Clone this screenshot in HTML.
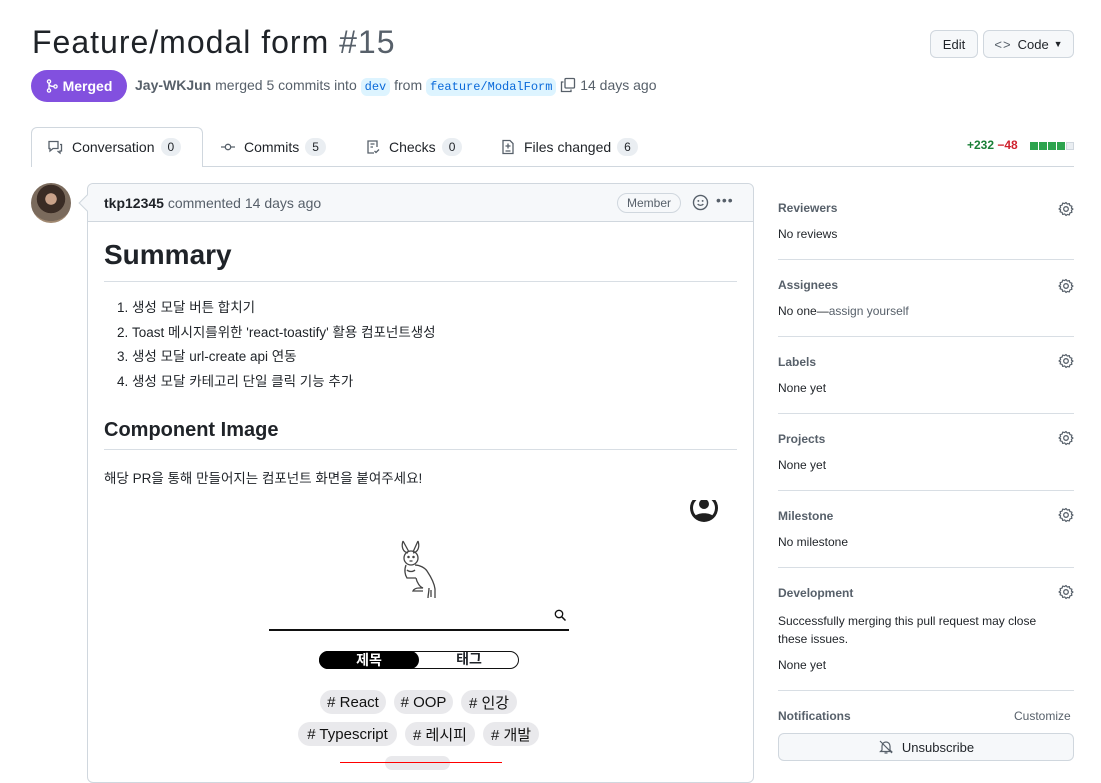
<!DOCTYPE html>
<html><head><meta charset="utf-8"><style>
*{box-sizing:border-box;margin:0;padding:0}
body{width:1101px;height:763px;overflow:hidden;background:#fff;font-family:"Liberation Sans","Noto Sans CJK KR",sans-serif;color:#1f2328;position:relative;font-size:14px}
.a{position:absolute;white-space:nowrap}
.btn{border:1px solid #d0d7de;background:#f6f8fa;border-radius:6px;font-size:13px;display:flex;align-items:center;justify-content:center}
.cnt{display:inline-block;background:#eaeef2;border-radius:10px;font-size:12px;padding:2px 7px;margin-left:6px;color:#1f2328}
.tab{position:absolute;top:128px;height:38px;display:flex;align-items:center;font-size:14px;color:#1f2328}
.mono{font-family:"Liberation Mono",monospace;font-size:12px;color:#0969da;background:#ddf4ff;border-radius:6px;padding:2px 4px}
.sh{position:absolute;left:778px;font-size:12px;font-weight:bold;color:#57606a}
.sv{position:absolute;left:778px;font-size:12px;color:#1f2328}
.hr{position:absolute;left:778px;width:296px;height:1px;background:#d8dee4}
.gear{position:absolute;left:1058px}
.tag{position:absolute;height:24px;background:#e9e9ec;border-radius:12px;font-size:15px;display:flex;align-items:center;justify-content:center;color:#111}
</style></head><body>
<div class="a" style="left:32px;top:24px;font-size:32px;letter-spacing:1px;color:#1f2328">Feature/modal form <span style="color:#57606a">#15</span></div>
<div class="a btn" style="left:930px;top:30px;width:48px;height:28px">Edit</div>
<div class="a btn" style="left:983px;top:30px;width:91px;height:28px"><span style="letter-spacing:1px;margin-right:6px;color:#57606a">&lt;&gt;</span>Code<span style="font-size:9px;margin-left:5px">▼</span></div>

<div class="a" style="left:31px;top:70px;width:96px;height:32px;background:#8250df;border-radius:16px;color:#fff;font-weight:bold;font-size:14px;display:flex;align-items:center;justify-content:center">
<svg width="12" height="14" viewBox="0 0 12 14" style="margin-right:5px"><circle cx="3" cy="2.5" r="1.6" fill="none" stroke="#fff" stroke-width="1.3"/><circle cx="3" cy="11.5" r="1.6" fill="none" stroke="#fff" stroke-width="1.3"/><circle cx="9.5" cy="7.5" r="1.6" fill="none" stroke="#fff" stroke-width="1.3"/><path d="M3 4v6M3 4c0 3 2 3.5 5 3.5" fill="none" stroke="#fff" stroke-width="1.3"/></svg>Merged</div>
<div class="a" style="left:135px;top:77px;font-size:14px;color:#57606a"><b style="color:#57606a">Jay-WKJun</b> merged 5 commits into <span class="mono">dev</span> from <span class="mono">feature/ModalForm</span> <svg width="16" height="16" viewBox="0 0 16 16" style="vertical-align:-3px"><rect x="5" y="1.5" width="9.5" height="9.5" rx="1" fill="none" stroke="#57606a" stroke-width="1.3"/><path d="M3.5 5H1.5v9.5H11v-2" fill="none" stroke="#57606a" stroke-width="1.3"/></svg> 14 days ago</div>

<div class="a" style="left:31px;top:127px;width:172px;height:40px;border:1px solid #d0d7de;border-bottom:none;border-radius:6px 6px 0 0;background:#fff;z-index:2"></div>
<div class="a" style="left:31px;top:166px;width:1043px;height:1px;background:#d0d7de"></div>
<div class="tab" style="left:47px;z-index:3"><svg width="16" height="16" viewBox="0 0 16 16" style="margin-right:9px"><path d="M2 2.5h9v7H6l-3 2.5V9.5H2z" fill="none" stroke="#57606a" stroke-width="1.3"/><path d="M13 5.5h1.5v6.5h-1.5v2l-2.5-2" fill="none" stroke="#57606a" stroke-width="1.3"/></svg>Conversation<span class="cnt">0</span></div>
<div class="tab" style="left:220px"><svg width="16" height="16" viewBox="0 0 16 16" style="margin-right:8px"><circle cx="8" cy="8" r="2.7" fill="none" stroke="#57606a" stroke-width="1.3"/><path d="M1 8h4.3M10.7 8H15" stroke="#57606a" stroke-width="1.3"/></svg>Commits<span class="cnt">5</span></div>
<div class="tab" style="left:365px"><svg width="16" height="16" viewBox="0 0 16 16" style="margin-right:8px"><path d="M9 14H3V2h9v6" fill="none" stroke="#57606a" stroke-width="1.3"/><path d="M5.5 5h4M5.5 8h2.5M9.5 12l1.5 1.5 3-3" fill="none" stroke="#57606a" stroke-width="1.3"/></svg>Checks<span class="cnt">0</span></div>
<div class="tab" style="left:500px"><svg width="16" height="16" viewBox="0 0 16 16" style="margin-right:8px"><path d="M3 1.5h7l3 3v10H3z" fill="none" stroke="#57606a" stroke-width="1.3"/><path d="M8 4.5v5M5.5 7h5M5.5 12h5" stroke="#57606a" stroke-width="1.3"/></svg>Files changed<span class="cnt">6</span></div>
<div class="a" style="left:967px;top:138px;font-size:12px;font-weight:bold"><span style="color:#1a7f37">+232</span> <span style="color:#cf222e">−48</span></div>
<div class="a" style="left:1030px;top:142px;display:flex;gap:1px"><i style="width:8px;height:8px;background:#2da44e"></i><i style="width:8px;height:8px;background:#2da44e"></i><i style="width:8px;height:8px;background:#2da44e"></i><i style="width:8px;height:8px;background:#2da44e"></i><i style="width:8px;height:8px;background:#eaeef2;border:1px solid #d0d7de"></i></div>

<div class="a" style="left:31px;top:183px;width:40px;height:40px;border-radius:50%;background:radial-gradient(circle at 50% 40%,#c9a28a 0 18%,#3a2c25 19% 45%,#7a6a5c 46% 70%,#a08870 71%)"></div>
<div class="a" style="left:87px;top:183px;width:667px;height:600px;border:1px solid #d0d7de;border-radius:6px"></div>
<div class="a" style="left:88px;top:184px;width:665px;height:38px;background:#f6f8fa;border-bottom:1px solid #d0d7de;border-radius:6px 6px 0 0"></div>
<div class="a" style="left:81px;top:197px;width:12px;height:12px;background:#f6f8fa;border-left:1px solid #d0d7de;border-bottom:1px solid #d0d7de;transform:rotate(45deg)"></div>
<div class="a" style="left:104px;top:195px;font-size:14px;color:#57606a"><b style="color:#1f2328">tkp12345</b> commented 14 days ago</div>
<div class="a" style="left:617px;top:193px;width:64px;height:20px;border:1px solid #d0d7de;border-radius:10px;font-size:12px;color:#57606a;display:flex;align-items:center;justify-content:center">Member</div>
<svg class="a" style="left:692px;top:194px" width="17" height="17" viewBox="0 0 16 16"><circle cx="8" cy="8" r="6.6" fill="none" stroke="#57606a" stroke-width="1.3"/><circle cx="6" cy="6.5" r=".9" fill="#57606a"/><circle cx="10" cy="6.5" r=".9" fill="#57606a"/><path d="M5.3 9.5c1.4 1.6 4 1.6 5.4 0" fill="none" stroke="#57606a" stroke-width="1.2"/></svg>
<div class="a" style="left:716px;top:192px;font-size:14px;color:#57606a;letter-spacing:1px">•••</div>

<div class="a" style="left:104px;top:239px;font-size:28px;font-weight:bold">Summary</div>
<div class="a" style="left:104px;top:281px;width:633px;height:1px;background:#d8dee4"></div>
<div class="a" style="left:117px;top:296px;font-size:13.5px;line-height:24.5px">1. 생성 모달 버튼 합치기<br>2. Toast 메시지를위한 'react-toastify' 활용 컴포넌트생성<br>3. 생성 모달 url-create api 연동<br>4. 생성 모달 카테고리 단일 클릭 기능 추가</div>
<div class="a" style="left:104px;top:419px;font-size:20px;font-weight:bold">Component Image</div>
<div class="a" style="left:104px;top:449px;width:633px;height:1px;background:#d8dee4"></div>
<div class="a" style="left:104px;top:467px;font-size:13.5px">해당 PR을 통해 만들어지는 컴포넌트 화면을 붙여주세요!</div>

<svg class="a" style="left:688px;top:498px" width="32" height="26" viewBox="0 0 32 26"><circle cx="16" cy="10" r="14" fill="#1f1f1f"/><circle cx="16" cy="10" r="11" fill="#fff"/><circle cx="16" cy="6" r="5" fill="#1f1f1f"/><path d="M6 19c3-5 17-5 20 0c-5 4-15 4-20 0z" fill="#1f1f1f"/><rect x="0" y="-4" width="32" height="6" fill="#fff"/></svg>
<svg class="a" style="left:396px;top:538px" width="48" height="62" viewBox="0 0 48 62" fill="none" stroke="#444" stroke-width="1.3"><path d="M7 3l6 11M22 3l-5 11M7 3c-2 6 0 11 5 12M22 3c2 6 0 11-5 12"/><ellipse cx="15" cy="20" rx="7" ry="7"/><circle cx="12.5" cy="19" r=".6" fill="#444"/><circle cx="17.5" cy="19" r=".6" fill="#444"/><path d="M13.5 23h3"/><path d="M10 27c-2 5-1 10 1 13h9M19 27c5 0 10 3 12 6s7 10 8 18v9M20 40c1 5 4 9 7 10h-4c-3 0-5 1-6 3h10M33 50c0 4-1 7-1 10M35 52v7"/><path d="M11 32c2 2 6 2 8 0"/></svg>
<div class="a" style="left:269px;top:629px;width:300px;height:1.5px;background:#111"></div>
<svg class="a" style="left:554px;top:609px" width="13" height="13" viewBox="0 0 13 13"><circle cx="5" cy="5" r="3.7" fill="none" stroke="#111" stroke-width="1.3"/><path d="M7.8 7.8l3.7 3.7" stroke="#111" stroke-width="1.5"/></svg>
<div class="a" style="left:319px;top:651px;width:200px;height:18px;border:1.5px solid #111;border-radius:9px"></div>
<div class="a" style="left:319px;top:651px;width:100px;height:18px;background:#000;border-radius:9px;color:#fff;font-weight:bold;font-size:14px;display:flex;align-items:center;justify-content:center;line-height:1">제목</div>
<div class="a" style="left:419px;top:650px;width:100px;height:18px;font-weight:bold;font-size:14px;display:flex;align-items:center;justify-content:center;line-height:1">태그</div>
<div class="tag" style="left:320px;top:690px;width:66px"># React</div>
<div class="tag" style="left:394px;top:690px;width:59px"># OOP</div>
<div class="tag" style="left:461px;top:690px;width:56px"># 인강</div>
<div class="tag" style="left:298px;top:722px;width:99px"># Typescript</div>
<div class="tag" style="left:405px;top:722px;width:70px"># 레시피</div>
<div class="tag" style="left:483px;top:722px;width:56px"># 개발</div>
<div class="a" style="left:385px;top:756px;width:65px;height:14px;background:#e9e9ec;border-radius:12px"></div>
<div class="a" style="left:340px;top:762px;width:162px;height:1px;background:#f00"></div>

<svg width="0" height="0" style="position:absolute"><defs><g id="g"><circle cx="8" cy="8" r="2.3" fill="none" stroke="#57606a" stroke-width="1.3"/><path d="M8 1.5l1.3 1.6 2-.5.6 2 2 .6-.5 2L15 8l-1.6 1.3.5 2-2 .6-.6 2-2-.5L8 14.5l-1.3-1.6-2 .5-.6-2-2-.6.5-2L1 8l1.6-1.3-.5-2 2-.6.6-2 2 .5z" fill="none" stroke="#57606a" stroke-width="1.2" stroke-linejoin="round"/></g></defs></svg>
<div class="sh" style="top:201px">Reviewers</div><svg class="gear" style="top:201px" width="16" height="16"><use href="#g"/></svg>
<div class="sv" style="top:227px">No reviews</div>
<div class="hr" style="top:259px"></div>
<div class="sh" style="top:278px">Assignees</div><svg class="gear" style="top:278px" width="16" height="16"><use href="#g"/></svg>
<div class="sv" style="top:304px">No one—<span style="color:#57606a">assign yourself</span></div>
<div class="hr" style="top:336px"></div>
<div class="sh" style="top:355px">Labels</div><svg class="gear" style="top:353px" width="16" height="16"><use href="#g"/></svg>
<div class="sv" style="top:381px">None yet</div>
<div class="hr" style="top:413px"></div>
<div class="sh" style="top:432px">Projects</div><svg class="gear" style="top:430px" width="16" height="16"><use href="#g"/></svg>
<div class="sv" style="top:458px">None yet</div>
<div class="hr" style="top:490px"></div>
<div class="sh" style="top:509px">Milestone</div><svg class="gear" style="top:507px" width="16" height="16"><use href="#g"/></svg>
<div class="sv" style="top:535px">No milestone</div>
<div class="hr" style="top:567px"></div>
<div class="sh" style="top:586px">Development</div><svg class="gear" style="top:584px" width="16" height="16"><use href="#g"/></svg>
<div class="sv" style="top:612px;line-height:18px;white-space:normal;width:290px">Successfully merging this pull request may close these issues.</div>
<div class="sv" style="top:658px">None yet</div>
<div class="hr" style="top:690px"></div>
<div class="sh" style="top:709px">Notifications</div>
<div class="a" style="left:1014px;top:709px;font-size:12px;color:#57606a">Customize</div>
<div class="a btn" style="left:778px;top:733px;width:296px;height:28px;color:#1f2328"><svg width="16" height="16" viewBox="0 0 16 16" style="margin-right:8px"><path d="M4 11V7a4 4 0 0 1 8 0v4l1.5 1.5h-11z M6.5 14h3M2 2l12 12" fill="none" stroke="#57606a" stroke-width="1.2"/></svg>Unsubscribe</div>
</body></html>
